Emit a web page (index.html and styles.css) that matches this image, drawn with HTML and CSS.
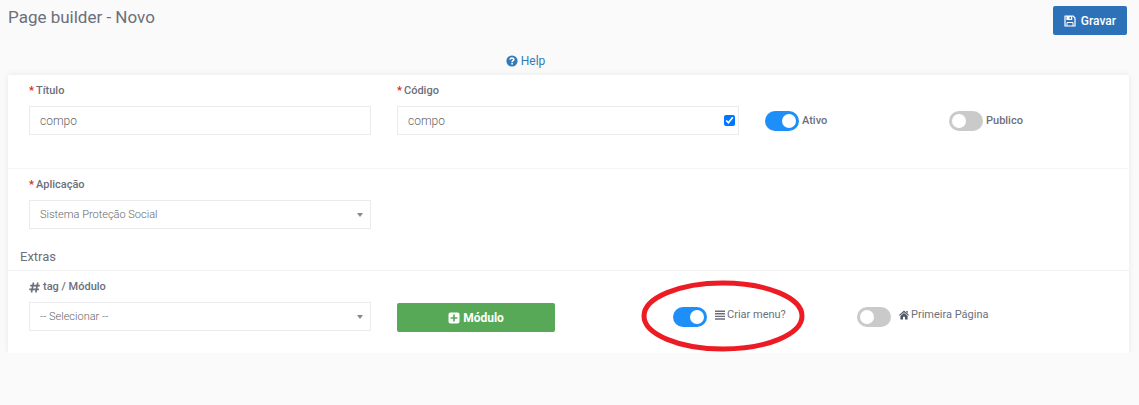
FILE: index.html
```html
<!DOCTYPE html>
<html lang="pt">
<head>
<meta charset="utf-8">
<meta name="viewport" content="width=device-width, initial-scale=1">
<title>Page builder - Novo</title>
<link rel="stylesheet" href="styles.css">
</head>
<body>
<header class="topbar">
  <h1 class="title">Page builder - Novo</h1>
  <button class="btn btn-save" type="submit" form="builder">
    <svg class="icon" viewBox="0 0 12 12" aria-hidden="true"><path fill="none" stroke="currentColor" stroke-width="1.2" stroke-linejoin="round" d="M1 1h8l2 2v8H1z"/><path fill="currentColor" fill-rule="evenodd" d="M2.4 1h5.8v4H2.4zM5.6 1.7v2.4h1.3V1.7z"/><path fill="none" stroke="currentColor" d="M3 11V7.5h6V11"/></svg>
    Gravar
  </button>
</header>
<nav class="help">
  <a class="help-link" href="#help">
    <svg class="icon" viewBox="0 0 12 12" aria-hidden="true"><circle cx="6" cy="6" r="5.6" fill="currentColor"/><path fill="none" stroke="#fff" stroke-width="1.6" d="M4 4.6C4.2 2.5 7.9 2.6 7.8 4.5C7.7 5.7 6.1 5.7 6.1 7.2M6.1 8v1.6"/></svg>
    Help
  </a>
</nav>
<form class="card" id="builder">
  <section class="row row-main">
    <div class="field span-4">
      <label class="label" for="titulo"><span class="required">*</span>Título</label>
      <input class="control" id="titulo" type="text" value="compo">
    </div>
    <div class="field span-4">
      <label class="label" for="codigo"><span class="required">*</span>Código</label>
      <div class="control-wrap">
        <input class="control" id="codigo" type="text" value="compo">
        <input class="check" type="checkbox" checked aria-label="Código automático">
      </div>
    </div>
    <label class="toggle span-2"><input class="switch" type="checkbox" checked><span class="toggle-name">Ativo</span></label>
    <label class="toggle span-2"><input class="switch" type="checkbox"><span class="toggle-name">Publico</span></label>
  </section>
  <section class="row row-app">
    <div class="field span-4">
      <label class="label" for="app"><span class="required">*</span>Aplicação</label>
      <div class="control-wrap">
        <select class="control select" id="app"><option>Sistema Proteção Social</option></select>
        <svg class="caret" viewBox="0 0 6 4" aria-hidden="true"><path fill="currentColor" d="M0 0h6L3 4z"/></svg>
      </div>
    </div>
  </section>
  <h2 class="subtitle">Extras</h2>
  <section class="row row-extras">
    <div class="field span-4">
      <label class="label label-tag" for="tag">
        <svg class="icon-hash" viewBox="0 0 11 11" aria-hidden="true"><path fill="none" stroke="currentColor" stroke-width="1.6" d="M4.5 .5l-2 10M8.8 .5l-2 10M1.2 3.6h9.6M.3 7.4h9.600"/></svg>
        tag / Módulo
      </label>
      <div class="control-wrap">
        <select class="control select" id="tag"><option>-- Selecionar --</option></select>
        <svg class="caret" viewBox="0 0 6 4" aria-hidden="true"><path fill="currentColor" d="M0 0h6L3 4z"/></svg>
      </div>
    </div>
    <button class="btn btn-module span-2" type="button">
      <svg class="icon" viewBox="0 0 12 12" aria-hidden="true"><rect x=".5" y=".5" width="11" height="11" rx="2" fill="currentColor"/><path stroke="#57a957" stroke-width="1.7" d="M6 2.6v6.8M2.6 6h6.8"/></svg>
      Módulo
    </button>
    <label class="toggle toggle-menu">
      <input class="switch" type="checkbox" checked>
      <span class="toggle-note"><svg class="icon-note" viewBox="0 0 10 10" aria-hidden="true"><path stroke="currentColor" stroke-width="1.4" d="M0 1.2h10M0 3.800h10M0 6.400h10M0 9h10"/></svg>Criar menu?</span>
      <svg class="highlight" viewBox="0 0 164 72" aria-hidden="true"><ellipse cx="82" cy="36" rx="79" ry="33" fill="none" stroke="#ed1c24" stroke-width="5"/></svg>
    </label>
    <label class="toggle span-2">
      <input class="switch" type="checkbox">
      <span class="toggle-note"><svg class="icon-note" viewBox="0 0 10 10" aria-hidden="true"><path fill="#4f5663" d="M5 .6L10 5l-.7.8L5 2.2.7 5.800 0 5l2-1.800zM7.300 1h1.400v2.300L7.300 2zM5 3l3.600 3v3.500H6V6.800H4v2.700H1.400V6z"/></svg>Primeira Página</span>
    </label>
  </section>
</form>
</body>
</html>
```

FILE: styles.css
```css
* {
  box-sizing: border-box;
}

body {
  margin: 0;
  padding: 0 10px 0 8px;
  background: #fafafa;
  color: #6c6f7b;
  font-family: Roboto, "Liberation Sans", sans-serif;
  font-size: 12px;
  line-height: 16px;
}

.topbar {
  display: flex;
  justify-content: space-between;
  align-items: flex-start;
  padding: 6px 2px 0 0;
}

.title {
  margin: 0;
  font-size: 17px;
  font-weight: 400;
  line-height: 22px;
}

.btn {
  display: flex;
  align-items: center;
  justify-content: center;
  height: 29px;
  padding: 0 11px;
  border: 0;
  border-radius: 2px;
  color: #fff;
  font-family: inherit;
  font-size: 12px;
  font-weight: 500;
}

.btn-save {
  gap: 5px;
  background: #2d72b8;
}

.btn-module {
  gap: 3px;
  margin-top: 24px;
  background: #57a957;
  font-weight: 700;
}

.icon {
  width: 12px;
  height: 12px;
}

.help {
  display: flex;
  justify-content: center;
  padding: 18px 86px 6px 0;
}

.help-link {
  display: flex;
  align-items: center;
  gap: 3px;
  color: #337ab7;
  font-size: 12px;
  text-decoration: none;
}

.card {
  background: #fff;
  box-shadow: 0 0 6px rgba(0, 0, 0, 0.08);
}

.row {
  display: grid;
  grid-template-columns: repeat(12, minmax(0, 1fr));
  column-gap: 26px;
  padding: 8px 22px 0 21px;
}

.row-main {
  padding-bottom: 33px;
  border-bottom: 1px solid #f5f5f7;
}

.row-app {
  padding-bottom: 20px;
}

.row-extras {
  padding-bottom: 21px;
  border-top: 1px solid #f1f1f4;
}

.subtitle {
  margin: 0;
  padding: 0 12px 5px;
  font-size: 13px;
  font-weight: 400;
}

.span-4 {
  grid-column: span 4;
}

.span-2 {
  grid-column: span 2;
}

.field {
  display: flex;
  flex-direction: column;
  gap: 7px;
}

.label {
  font-size: 11px;
  font-weight: 500;
}

.label-tag {
  display: flex;
  align-items: center;
  gap: 3px;
}

.required {
  margin-right: 2px;
  color: #d9291c;
  font-weight: 700;
}

.icon-hash {
  width: 11px;
  height: 11px;
}

.control-wrap {
  position: relative;
}

.control {
  display: block;
  width: 100%;
  height: 29px;
  padding: 0 10px;
  border: 1px solid #ebebee;
  border-radius: 0;
  background: #fff;
  color: #666;
  font-family: inherit;
  font-size: 12px;
  font-weight: 300;
}

.select {
  appearance: none;
  font-size: 11px;
}

.caret {
  position: absolute;
  top: 13px;
  right: 8px;
  width: 6px;
  height: 4px;
  color: #888;
}

.check {
  position: absolute;
  top: 9px;
  right: 4px;
  width: 11px;
  height: 11px;
  margin: 0;
  accent-color: #0075ff;
}

.toggle {
  display: flex;
  align-items: center;
  gap: 3px;
  height: 22px;
  margin-top: 27px;
  white-space: nowrap;
}

.row-extras .toggle {
  gap: 8px;
}

.toggle-name {
  font-size: 11px;
  font-weight: 500;
}

.toggle-note {
  display: flex;
  align-items: center;
  gap: 2px;
  padding-bottom: 4px;
  font-size: 11px;
}

.icon-note {
  width: 10px;
  height: 10px;
}

.switch {
  appearance: none;
  display: flex;
  flex: none;
  width: 34px;
  height: 20px;
  margin: 0;
  padding: 3px;
  border-radius: 10px;
  background: #cacaca;
}

.switch::before {
  content: "";
  width: 14px;
  height: 14px;
  border-radius: 7px;
  background: #fff;
}

.switch:checked {
  justify-content: flex-end;
  background: #1e8ff9;
}

.toggle-menu {
  position: relative;
  grid-column: 8 / span 2;
}

.highlight {
  position: absolute;
  top: -26px;
  left: -32px;
  width: 164px;
  height: 72px;
  pointer-events: none;
}
```
